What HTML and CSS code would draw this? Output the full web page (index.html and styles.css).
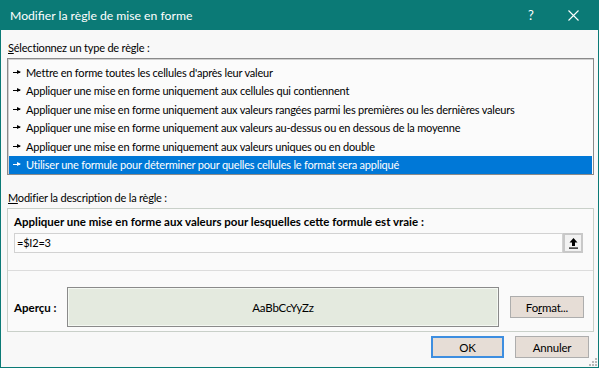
FILE: index.html
```html
<!DOCTYPE html>
<html lang="fr">
	<head>
		<meta charset="UTF-8" />
		<title>Modifier la règle de mise en forme</title>
		<link rel="stylesheet" href="styles.css">
	</head>

	<body>
		<div class="dialog">
			<!-- Title bar -->
			<div class="titleBar">
				<span class="titleText">Modifier la règle de mise en forme</span>
				<span class="titleHelp">?</span>
				<span class="titleClose">
					<svg width="11" height="11" viewBox="0 0 11 11">
						<path d="M0.5 0.5 L10.5 10.5 M10.5 0.5 L0.5 10.5" stroke="#fff" stroke-width="1.1" fill="none" />
					</svg>
				</span>
			</div>

			<div class="dialogBody">
				<div class="sectionLabel"><u>S</u>électionnez un type de règle :</div>
				<div class="ruleList">
					<div class="ruleItem"><span class="ruleArrow"></span>Mettre en forme toutes les cellules d'après leur valeur</div>
					<div class="ruleItem"><span class="ruleArrow"></span>Appliquer une mise en forme uniquement aux cellules qui contiennent</div>
					<div class="ruleItem"><span class="ruleArrow"></span>Appliquer une mise en forme uniquement aux valeurs rangées parmi les premières ou les dernières valeurs</div>
					<div class="ruleItem"><span class="ruleArrow"></span>Appliquer une mise en forme uniquement aux valeurs au-dessus ou en dessous de la moyenne</div>
					<div class="ruleItem"><span class="ruleArrow"></span>Appliquer une mise en forme uniquement aux valeurs uniques ou en double</div>
					<div class="ruleItem selected"><span class="ruleArrow"></span>Utiliser une formule pour déterminer pour quelles cellules le format sera appliqué</div>
				</div>

				<div class="sectionLabel descLabel"><u>M</u>odifier la description de la règle :</div>
				<div class="ruleBox">
					<div class="formulaLabel">Appliquer une mise en forme aux valeurs pour lesquelles cette formule est vraie :</div>
					<div class="formulaRow">
						<div class="formulaInput">=$I2=3</div>
						<div class="rangeButton">
							<svg width="11" height="12" viewBox="0 0 11 12">
								<path d="M5.5 1 L1.5 5.5 L4 5.5 L4 9 L7 9 L7 5.5 L9.5 5.5 Z" fill="#000" />
								<rect x="1" y="10.5" width="9" height="1.2" fill="#000" />
							</svg>
						</div>
					</div>
					<div class="previewRow">
						<div class="previewLabel">Aperçu :</div>
						<div class="previewBox">AaBbCcYyZz</div>
						<div class="btn formatBtn">Fo<u>r</u>mat...</div>
					</div>
				</div>

				<div class="buttonRow">
					<div class="btn okBtn">OK</div>
					<div class="btn">Annuler</div>
				</div>
			</div>

			<svg class="gripper" width="10" height="10" viewBox="0 0 10 10">
				<rect x="7" y="1" width="2" height="2" fill="#b8b8b8" />
				<rect x="4" y="4" width="2" height="2" fill="#b8b8b8" />
				<rect x="7" y="4" width="2" height="2" fill="#b8b8b8" />
				<rect x="1" y="7" width="2" height="2" fill="#b8b8b8" />
				<rect x="4" y="7" width="2" height="2" fill="#b8b8b8" />
				<rect x="7" y="7" width="2" height="2" fill="#b8b8b8" />
			</svg>
		</div>
	</body>
</html>
```

FILE: styles.css
```css
body {
	margin: 0;
	font-family: Lato, "Noto Sans", sans-serif;
	font-size: 11px;
	letter-spacing: -0.2px;
	color: #000;
	background: #fff;
}

.dialog {
	position: relative;
	width: 599px;
	height: 368px;
	box-sizing: border-box;
	background-color: #f8f8f8;
	border: 1px solid #0b7a76;
	border-top: none;
}

.titleBar {
	display: flex;
	align-items: center;
	height: 30px;
	margin: 0 -1px;
	background-color: #0b7a76;
	color: #fff;
	letter-spacing: 0;
}

.titleText {
	flex: 1;
	padding-left: 10px;
	font-size: 12.2px;
}

.titleHelp {
	width: 14px;
	font-size: 13px;
	margin-right: 26px;
}

.titleClose {
	display: flex;
	margin-right: 20px;
}

.dialogBody {
	padding: 0 4px 0 6px;
}

.sectionLabel {
	height: 16px;
	line-height: 16px;
	margin-top: 10px;
	padding-left: 1px;
}

.descLabel {
	margin-top: 15px;
}

.ruleList {
	margin-top: 2px;
	height: 117px;
	box-sizing: border-box;
	padding: 4px 1px 0 1px;
	background-color: #fbfbfb;
	border: 1px solid #8a8a8a;
	box-shadow: inset 1px 1px 0 #d0d0d0;
}

.ruleItem {
	display: flex;
	align-items: center;
	height: 18.5px;
	padding-left: 4px;
	white-space: nowrap;
}

.ruleItem.selected {
	background-color: #0078d7;
	color: #fff;
}

.ruleArrow {
	position: relative;
	flex-shrink: 0;
	width: 7px;
	height: 1px;
	margin-right: 6px;
	background-color: currentColor;
}

.ruleArrow::after {
	content: "";
	position: absolute;
	right: -1px;
	top: -2px;
	border-left: 4px solid currentColor;
	border-top: 2.5px solid transparent;
	border-bottom: 2.5px solid transparent;
}

.ruleBox {
	margin-top: 2px;
	height: 124px;
	box-sizing: border-box;
	border: 1px solid #c9d0c9;
	background-color: #fafafa;
	padding: 5px 0 0 0;
}

.formulaLabel {
	font-weight: bold;
	font-size: 11.5px;
	letter-spacing: 0;
	height: 16px;
	line-height: 16px;
	padding-left: 6px;
	white-space: nowrap;
}

.formulaRow {
	display: flex;
	margin: 3px 0 0 6px;
	height: 20px;
	border-bottom: 1px solid transparent;
}

.formulaInput {
	width: 549px;
	box-sizing: border-box;
	border: 1px solid #d2d2d2;
	background-color: #fcfcfc;
	padding-left: 2px;
	line-height: 18px;
}

.rangeButton {
	display: flex;
	align-items: center;
	justify-content: center;
	width: 20px;
	box-sizing: border-box;
	border: 2px solid #c8c8c8;
	background-color: #f2f2f2;
}

.previewRow {
	display: flex;
	align-items: center;
	margin-top: 16px;
	padding-top: 16px;
	border-top: 1px solid #dcdcdc;
}

.previewLabel {
	width: 59px;
	padding-left: 6px;
	font-weight: bold;
	font-size: 11.5px;
	letter-spacing: 0;
	box-sizing: border-box;
}

.previewBox {
	width: 432px;
	height: 40px;
	box-sizing: border-box;
	border: 1px solid #8a8a8a;
	box-shadow: inset 0 0 0 1px #f4f8f2;
	background-color: #e4eadf;
	display: flex;
	align-items: center;
	justify-content: center;
	font-size: 11.5px;
}

.btn {
	display: flex;
	align-items: center;
	justify-content: center;
	height: 22px;
	width: 74px;
	box-sizing: border-box;
	border: 1px solid #adadad;
	background-color: #e6ddd6;
	font-size: 11.5px;
}

.formatBtn {
	margin-left: 11px;
}

.buttonRow {
	display: flex;
	justify-content: flex-end;
	gap: 11px;
	margin-top: 4px;
	padding-right: 5px;
}

.okBtn {
	border: 2px solid #3d8ee0;
	width: 73px;
}

.gripper {
	position: absolute;
	right: 0;
	bottom: 0;
}
```
